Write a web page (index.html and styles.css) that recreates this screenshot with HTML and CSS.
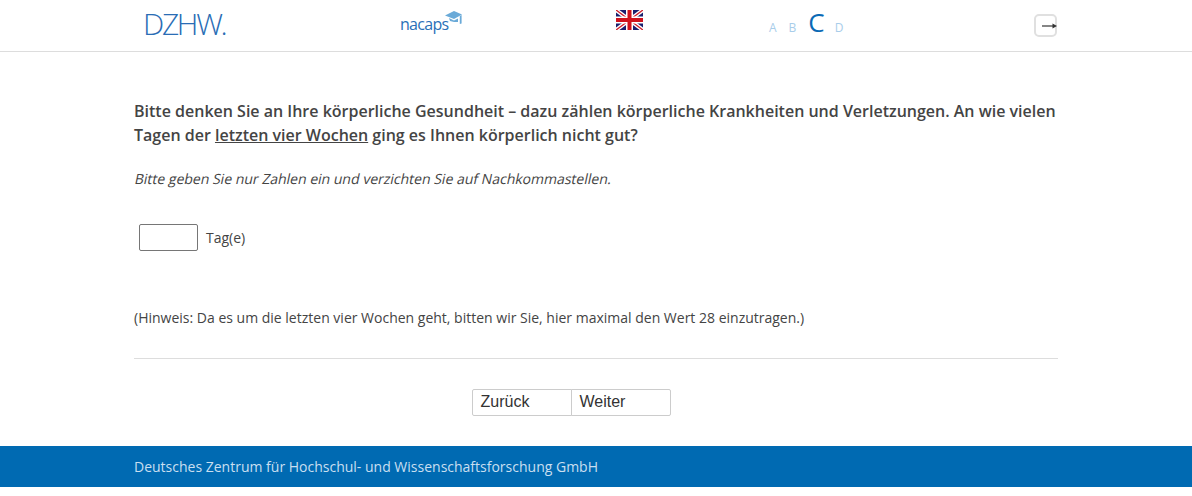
FILE: index.html
```html
<!DOCTYPE html>
<html lang="de">
<head>
    <meta charset="UTF-8">
    <title>Befragung</title>
    <link rel="stylesheet" href="styles.css">
</head>
<body>
    <header class="header">
        <div class="header-cell logo-cell"><span class="logo-dzhw">DZHW.</span></div>
        <div class="header-cell nacaps-cell">
            <span class="logo-nacaps">nacaps</span>
            <svg class="nacaps-cap" width="17" height="14" viewBox="0 0 17 14" aria-hidden="true">
                <path d="M0 4.5 L9 0 L17 3.5 L9 8 Z" fill="#6aaad8"/>
                <path d="M4 7 L9 9.5 L13 7.5 L13 11 L9 11 L5 10 Z" fill="#6aaad8"/>
                <path d="M14.8 5 L16.6 4 L16.6 12.5 L14.8 13 Z" fill="#6aaad8"/>
            </svg>
        </div>
        <div class="header-cell flag-cell">
            <svg width="27" height="20" viewBox="0 0 27 20" aria-label="English">
                <rect width="27" height="20" fill="#1a1f6e"/>
                <path d="M0 0 L27 20 M27 0 L0 20" stroke="#fff" stroke-width="4"/>
                <path d="M0 0 L27 20 M27 0 L0 20" stroke="#d0202c" stroke-width="1.4"/>
                <path d="M13.5 0 V20 M0 10 H27" stroke="#fff" stroke-width="7"/>
                <path d="M13.5 0 V20 M0 10 H27" stroke="#d0121c" stroke-width="4"/>
            </svg>
        </div>
        <div class="header-cell font-cell">
            <span class="font-size">A</span>
            <span class="font-size">B</span>
            <span class="font-size active">C</span>
            <span class="font-size">D</span>
        </div>
        <div class="exit-button">
            <svg width="16" height="8" viewBox="0 0 16 8" aria-hidden="true">
                <path d="M0 4 H11" stroke="#444" stroke-width="1.3"/>
                <path d="M10.5 1.5 L15 4 L10.5 6.5 Z" fill="#333"/>
            </svg>
        </div>
    </header>

    <main class="content">
        <p class="question">Bitte denken Sie an Ihre körperliche Gesundheit – dazu zählen körperliche Krankheiten und Verletzungen. An wie vielen Tagen der <u>letzten vier Wochen</u> ging es Ihnen körperlich nicht gut?</p>
        <p class="instruction">Bitte geben Sie nur Zahlen ein und verzichten Sie auf Nachkommastellen.</p>
        <div class="answer">
            <input type="text" class="answer-input" aria-label="Tage">
            <span>Tag(e)</span>
        </div>
        <p class="hint">(Hinweis: Da es um die letzten vier Wochen geht, bitten wir Sie, hier maximal den Wert 28 einzutragen.)</p>
        <hr class="divider">
        <div class="nav-buttons">
            <button type="button" class="nav-button">Zurück</button>
            <button type="button" class="nav-button">Weiter</button>
        </div>
    </main>

    <footer class="footer">Deutsches Zentrum für Hochschul- und Wissenschaftsforschung GmbH</footer>
</body>
</html>
```

FILE: styles.css
```css
* {
    margin: 0;
    padding: 0;
    box-sizing: border-box;
}

body {
    font-family: 'Open Sans', sans-serif;
    font-size: 14px;
    color: #444;
    background: #fff;
}

.header {
    display: flex;
    height: 52px;
    padding: 0 134px;
    border-bottom: 1px solid #ddd;
}

.header-cell {
    display: flex;
}

.logo-cell {
    width: 266px;
    padding-left: 9px;
}

.logo-dzhw {
    margin-top: 4px;
    font-size: 30px;
    font-weight: 350;
    line-height: 40px;
    letter-spacing: -2.3px;
    color: #2a6db5;
}

.nacaps-cell {
    position: relative;
    width: 216px;
}

.logo-nacaps {
    margin-top: 13px;
    font-size: 16px;
    line-height: 22px;
    letter-spacing: -0.7px;
    color: #2a70b8;
}

.nacaps-cap {
    position: absolute;
    left: 45px;
    top: 11px;
}

.flag-cell {
    width: 153px;
    padding-top: 10px;
    align-items: flex-start;
}

.font-cell {
    width: 265px;
    align-items: baseline;
    gap: 12px;
    padding-top: 6px;
}

.font-size {
    font-size: 12px;
    line-height: 32px;
    color: #a8cdea;
}

.font-size.active {
    margin-right: -2px;
    font-size: 26px;
    color: #0a6ab5;
}

.exit-button {
    display: flex;
    align-items: center;
    justify-content: flex-end;
    width: 23px;
    height: 23px;
    margin-top: 14px;
    border: 2px solid #e0e0e0;
    border-radius: 5px;
}

.exit-button svg {
    margin-right: -3px;
}

.content {
    padding: 47px 134px 0;
}

.question {
    font-size: 16px;
    line-height: 24px;
    font-weight: 600;
}

/* the original has no italic face, so its slant is a skewed regular */
.instruction {
    margin-top: 22px;
    line-height: 20px;
    transform: skewX(-12deg);
    transform-origin: 0 15px;
}

.answer {
    display: flex;
    align-items: center;
    gap: 8px;
    margin-top: 35px;
    padding-left: 5px;
}

.answer-input {
    width: 59px;
    height: 27px;
    border: 1px solid #767676;
    border-radius: 2px;
    background: #fff;
}

.hint {
    margin-top: 57px;
    line-height: 20px;
}

.divider {
    margin-top: 30px;
    border: 0;
    border-top: 1px solid #ddd;
}

.nav-buttons {
    display: flex;
    justify-content: center;
    margin-top: 30px;
    padding-right: 50px;
}

.nav-button {
    width: 100px;
    height: 27px;
    padding: 0 0 2px 8px;
    font-family: 'Liberation Sans', Arial, sans-serif;
    font-size: 16px;
    text-align: left;
    color: #333;
    background: #fff;
    border: 1px solid #ccc;
}

.nav-button:first-child {
    border-radius: 2px 0 0 2px;
}

.nav-button:last-child {
    margin-left: -1px;
    border-radius: 0 2px 2px 0;
}

.footer {
    height: 41px;
    margin-top: 30px;
    padding-left: 134px;
    line-height: 41px;
    color: #c9dff0;
    background: #006ab2;
}
```
